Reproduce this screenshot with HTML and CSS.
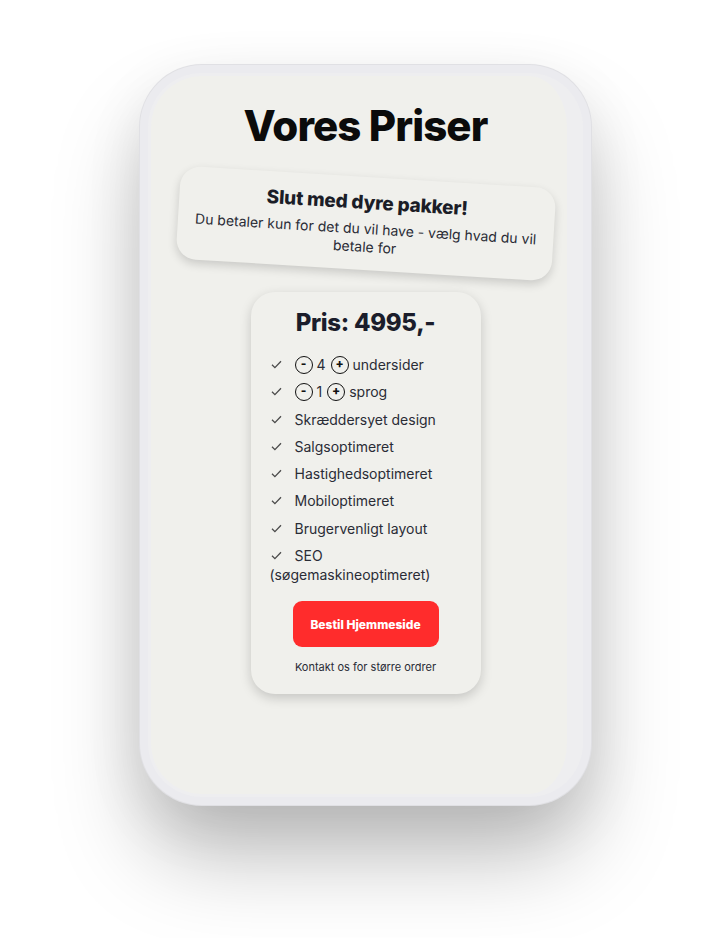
FILE: index.html
```html
<!DOCTYPE html>
<html lang="da">
<head>
<meta charset="utf-8">
<title>Vores Priser</title>
<link rel="stylesheet" href="styles.css">
</head>
<body>
<div class="stage">
  <div class="phone">
    <div class="screen">
      <h1 class="title">Vores Priser</h1>
      <div class="promo">
        <h2 class="promo-title">Slut med dyre pakker!</h2>
        <p class="promo-text">Du betaler kun for det du vil have - vælg hvad du vil betale for</p>
      </div>
      <div class="price-card">
        <h3 class="price">Pris: 4995,-</h3>
        <ul class="features">
          <li class="feature"><span class="check"><svg width="11" height="9" viewBox="0 0 11 9"><path d="M1 4.8 L3.9 7.6 L10 1.2" fill="none" stroke="#4a4a4a" stroke-width="1.3"/></svg></span><span class="ctrl">-</span><span class="num">4</span><span class="ctrl">+</span>undersider</li>
          <li class="feature"><span class="check"><svg width="11" height="9" viewBox="0 0 11 9"><path d="M1 4.8 L3.9 7.6 L10 1.2" fill="none" stroke="#4a4a4a" stroke-width="1.3"/></svg></span><span class="ctrl">-</span><span class="num">1</span><span class="ctrl">+</span>sprog</li>
          <li class="feature"><span class="check"><svg width="11" height="9" viewBox="0 0 11 9"><path d="M1 4.8 L3.9 7.6 L10 1.2" fill="none" stroke="#4a4a4a" stroke-width="1.3"/></svg></span>Skræddersyet design</li>
          <li class="feature"><span class="check"><svg width="11" height="9" viewBox="0 0 11 9"><path d="M1 4.8 L3.9 7.6 L10 1.2" fill="none" stroke="#4a4a4a" stroke-width="1.3"/></svg></span>Salgsoptimeret</li>
          <li class="feature"><span class="check"><svg width="11" height="9" viewBox="0 0 11 9"><path d="M1 4.8 L3.9 7.6 L10 1.2" fill="none" stroke="#4a4a4a" stroke-width="1.3"/></svg></span>Hastighedsoptimeret</li>
          <li class="feature"><span class="check"><svg width="11" height="9" viewBox="0 0 11 9"><path d="M1 4.8 L3.9 7.6 L10 1.2" fill="none" stroke="#4a4a4a" stroke-width="1.3"/></svg></span>Mobiloptimeret</li>
          <li class="feature"><span class="check"><svg width="11" height="9" viewBox="0 0 11 9"><path d="M1 4.8 L3.9 7.6 L10 1.2" fill="none" stroke="#4a4a4a" stroke-width="1.3"/></svg></span>Brugervenligt layout</li>
          <li class="feature"><span class="check"><svg width="11" height="9" viewBox="0 0 11 9"><path d="M1 4.8 L3.9 7.6 L10 1.2" fill="none" stroke="#4a4a4a" stroke-width="1.3"/></svg></span>SEO (søgemaskineoptimeret)</li>
        </ul>
        <button class="order">Bestil Hjemmeside</button>
        <p class="contact">Kontakt os for større ordrer</p>
      </div>
    </div>
  </div>
</div>
</body>
</html>
```

FILE: styles.css
```css
html, body {
  margin: 0;
  padding: 0;
  background: #ffffff;
}

body {
  min-height: 938px;
  font-family: "Inter", "Lato", sans-serif;
  color: #2a2c36;
}

.stage {
  display: flex;
  justify-content: center;
  padding-top: 65px;
  padding-bottom: 133px;
  padding-left: 3px;
}

.phone {
  width: 451px;
  height: 740px;
  box-sizing: border-box;
  padding: 8px;
  border-radius: 62px;
  background: #ebebef;
  box-shadow: 0 0 0 1px #e0e0e4, 0 55px 90px -5px rgba(0, 0, 0, 0.26), 0 20px 60px rgba(0, 0, 0, 0.08);
}

.screen {
  height: 100%;
  box-sizing: border-box;
  border-radius: 54px;
  background: #f0f0ec;
  border: 3px solid #eeeef0;
  border-right-width: 16px;
  display: flex;
  flex-direction: column;
  align-items: center;
  padding-top: 24px;
  padding-left: 13px;
}

.title {
  margin: 0;
  font-size: 42px;
  font-weight: 800;
  color: #0b0b0b;
  letter-spacing: -0.9px;
  line-height: 52px;
}

.promo {
  margin-top: 25px;
  width: 376px;
  box-sizing: border-box;
  padding: 14px 12px 14px;
  border-radius: 20px;
  background: #f0f0ec;
  box-shadow: 0 4px 10px rgba(0, 0, 0, 0.16);
  transform: rotate(3.5deg);
  text-align: center;
}

.promo-title {
  margin: 0 0 5px;
  font-size: 19px;
  font-weight: 800;
  color: #1b1d27;
  line-height: 24px;
  letter-spacing: -0.2px;
}

.promo-text {
  margin: 0;
  font-size: 14px;
  line-height: 18px;
  color: #2a2c36;
}

.price-card {
  margin-top: 22px;
  width: 230px;
  box-sizing: border-box;
  padding: 16px 19px 20px;
  border-radius: 24px;
  background: #f0f0ec;
  box-shadow: 0 4px 12px rgba(0, 0, 0, 0.18);
  display: flex;
  flex-direction: column;
  align-items: center;
}

.price {
  margin: 0;
  font-size: 24px;
  font-weight: 800;
  color: #1b1d2b;
  line-height: 30px;
  letter-spacing: -0.3px;
}

.features {
  list-style: none;
  margin: 17px 0 0;
  padding: 0;
  align-self: stretch;
}

.feature {
  font-size: 14px;
  line-height: 19px;
  color: #2a2c36;
  margin-bottom: 8.3px;
}

.feature:last-child {
  margin-bottom: 0;
}

.check {
  display: inline-block;
  width: 25px;
  line-height: 0;
  vertical-align: 1px;
  padding-left: 1px;
  box-sizing: border-box;
}

.ctrl {
  display: inline-block;
  box-sizing: border-box;
  width: 18px;
  height: 18px;
  border: 1.6px solid #111;
  border-radius: 50%;
  font-size: 12px;
  font-weight: 800;
  line-height: 14px;
  text-align: center;
  color: #111;
  vertical-align: middle;
  margin-top: -3px;
  margin-right: 4px;
}

.num {
  margin-right: 5px;
}

.order {
  margin-top: 17px;
  width: 146px;
  height: 46px;
  border: none;
  border-radius: 9px;
  background: #ff2c2c;
  color: #ffffff;
  font-family: "Inter", sans-serif;
  font-size: 12px;
  font-weight: 800;
  cursor: pointer;
}

.contact {
  margin: 13px 0 0;
  font-size: 11px;
  line-height: 14px;
  color: #2a2c36;
}
```
